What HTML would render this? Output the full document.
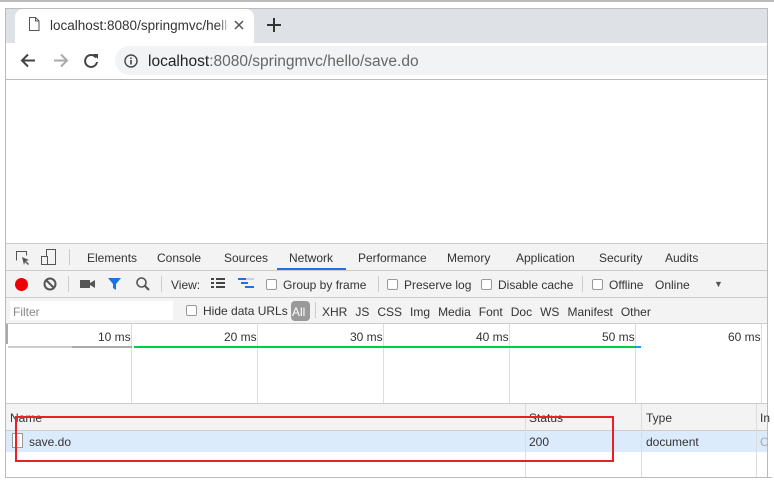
<!DOCTYPE html>
<html><head><meta charset="utf-8"><style>
*{box-sizing:border-box;margin:0;padding:0}
body{width:774px;height:483px;background:#fff;position:relative;overflow:hidden;font-family:"Liberation Sans",sans-serif;color:#333}
.a{position:absolute}
.t{font-size:12px;color:#333;white-space:nowrap;margin-top:1px}
.cb{display:inline-block;width:11px;height:11px;border:1px solid #999;border-radius:2px;background:#fff;vertical-align:-1px;margin-right:6px}
.sep{position:absolute;width:1px;background:#ccc}
.ft span{margin-right:8px}
</style></head><body>
<div class="a" style="left:0;top:0;width:774px;height:2px;background:#bbb"></div>
<div class="a" style="left:5px;top:8px;width:763px;height:470px;border:1px solid #bbb;border-bottom:none"></div>
<div class="a" style="left:6px;top:9px;width:761px;height:34px;background:#dee1e6"></div>
<div class="a" style="left:15px;top:9px;width:239px;height:34px;background:#fff;border-radius:8px 8px 0 0"></div>
<svg class="a" style="left:28px;top:17px" width="12" height="14"><path d="M1.5 .5h6l3.5 3.5v9.5h-9.5z M7.5 .5v3.5h3.5" fill="none" stroke="#555"/></svg>
<div class="a t" style="left:50px;top:17px;font-size:13.5px;color:#333;width:178px;overflow:hidden">localhost:8080/springmvc/hello</div>
<div class="a" style="left:218px;top:15px;width:12px;height:20px;background:linear-gradient(90deg,rgba(255,255,255,0),#fff)"></div>
<svg class="a" style="left:234px;top:20px" width="10" height="10"><path d="M1 1l8 8M9 1l-8 8" stroke="#555" stroke-width="1.5"/></svg>
<svg class="a" style="left:267px;top:18px" width="14" height="14"><path d="M7 0v14M0 7h14" stroke="#333" stroke-width="2"/></svg>
<svg class="a" style="left:20px;top:53px" width="16" height="15"><path d="M15 7.5H2M8 1.5l-6 6 6 6" fill="none" stroke="#444" stroke-width="2"/></svg>
<svg class="a" style="left:53px;top:53px" width="16" height="15"><path d="M1 7.5h13M8 1.5l6 6-6 6" fill="none" stroke="#aaa" stroke-width="2"/></svg>
<svg class="a" style="left:84px;top:53px" width="15" height="15"><path d="M12 4.5A6 6 0 1 0 13 9" fill="none" stroke="#444" stroke-width="2"/><path d="M9 1l5 0 0 5z" fill="#444"/></svg>
<div class="a" style="left:115px;top:46px;width:652px;height:29px;background:#f1f3f4;border-radius:15px 0 0 15px"></div>
<svg class="a" style="left:124px;top:54px" width="14" height="14"><circle cx="7" cy="7" r="6" fill="none" stroke="#444" stroke-width="1.4"/><path d="M7 6v4.5M7 3.5v1.5" stroke="#444" stroke-width="1.6"/></svg>
<div class="a t" style="left:148px;top:52px;font-size:15.5px;color:#222">localhost<span style="color:#666">:8080/springmvc/hello/save.do</span></div>
<div class="a" style="left:6px;top:79px;width:761px;height:1px;background:#bbb"></div>
<div class="a" style="left:6px;top:243px;width:761px;height:1px;background:#ccc"></div>
<div class="a" style="left:6px;top:244px;width:761px;height:233px;background:#f3f3f3"></div>
<svg class="a" style="left:15px;top:250px" width="16" height="16"><path d="M1.5 10.5v-9h10v4" fill="none" stroke="#555"/><path d="M7 7l7 3-3 1 3 3-1 1-3-3-1 3z" fill="#555"/></svg>
<svg class="a" style="left:41px;top:249px" width="16" height="17"><rect x="5.5" y=".5" width="9" height="15" fill="none" stroke="#555"/><rect x=".5" y="7.5" width="6" height="8" fill="#f3f3f3" stroke="#555"/></svg>
<div class="sep" style="left:69px;top:249px;height:16px"></div>
<div class="a t" style="left:87px;top:250px">Elements</div>
<div class="a t" style="left:157px;top:250px">Console</div>
<div class="a t" style="left:224px;top:250px">Sources</div>
<div class="a t" style="left:289px;top:250px">Network</div>
<div class="a" style="left:277px;top:268px;width:69px;height:2px;background:#1a73e8"></div>
<div class="a t" style="left:358px;top:250px">Performance</div>
<div class="a t" style="left:447px;top:250px">Memory</div>
<div class="a t" style="left:516px;top:250px">Application</div>
<div class="a t" style="left:599px;top:250px">Security</div>
<div class="a t" style="left:665px;top:250px">Audits</div>
<div class="a" style="left:6px;top:270px;width:761px;height:1px;background:#ccc"></div>
<div class="a" style="left:15px;top:278px;width:13px;height:13px;border-radius:50%;background:#e00"></div>
<svg class="a" style="left:43px;top:277px" width="14" height="14"><circle cx="7" cy="7" r="5.5" fill="none" stroke="#555" stroke-width="2"/><path d="M3 3l8 8" stroke="#555" stroke-width="2"/></svg>
<div class="sep" style="left:68px;top:276px;height:16px"></div>
<svg class="a" style="left:80px;top:279px" width="15" height="10"><rect x="0" y="1" width="10" height="8" fill="#555"/><path d="M10 4l5-3v8l-5-3z" fill="#555"/></svg>
<svg class="a" style="left:107px;top:277px" width="15" height="14"><path d="M1 1h13l-5 6v6l-3-2v-4z" fill="#1a73e8"/></svg>
<svg class="a" style="left:136px;top:277px" width="14" height="14"><circle cx="5.5" cy="5.5" r="4.5" fill="none" stroke="#555" stroke-width="1.6"/><path d="M9 9l4 4" stroke="#555" stroke-width="2"/></svg>
<div class="sep" style="left:161px;top:276px;height:16px"></div>
<div class="a t" style="left:171px;top:277px">View:</div>
<svg class="a" style="left:211px;top:278px" width="14" height="12"><path d="M0 1h3M5 1h9M0 5h3M5 5h9M0 9h3M5 9h9" stroke="#444" stroke-width="2"/></svg>
<svg class="a" style="left:238px;top:278px" width="16" height="12"><path d="M0 1h8M3 5h7M7 9h9" stroke="#1a73e8" stroke-width="2"/><path d="M8 1h8" stroke="#aac" stroke-width="1"/></svg>
<div class="a t" style="left:266px;top:277px"><span class="cb"></span>Group by frame</div>
<div class="sep" style="left:378px;top:276px;height:16px"></div>
<div class="a t" style="left:387px;top:277px"><span class="cb"></span>Preserve log</div>
<div class="a t" style="left:481px;top:277px"><span class="cb"></span>Disable cache</div>
<div class="sep" style="left:582px;top:276px;height:16px"></div>
<div class="a t" style="left:592px;top:277px"><span class="cb"></span>Offline</div>
<div class="a t" style="left:655px;top:277px">Online</div>
<div class="a t" style="left:714px;top:278px;font-size:9px;color:#555">▼</div>
<div class="a" style="left:6px;top:297px;width:761px;height:1px;background:#ccc"></div>
<div class="a" style="left:10px;top:301px;width:163px;height:19px;background:#fff"></div>
<div class="a t" style="left:13px;top:304px;color:#888">Filter</div>
<div class="a t" style="left:186px;top:303px"><span class="cb"></span>Hide data URLs</div>
<div class="a" style="left:291px;top:301px;width:19px;height:20px;border-radius:4px;background:#999"></div>
<div class="a t" style="left:292px;top:304px;color:#fff">All</div>
<div class="sep" style="left:315px;top:302px;height:16px"></div>
<div class="a t ft" style="left:322px;top:304px"><span>XHR</span><span>JS</span><span>CSS</span><span>Img</span><span>Media</span><span>Font</span><span>Doc</span><span>WS</span><span>Manifest</span><span>Other</span></div>
<div class="a" style="left:6px;top:323px;width:761px;height:1px;background:#ccc"></div>
<div class="a" style="left:6px;top:324px;width:761px;height:79px;background:#fff"></div>
<div class="a" style="left:6px;top:324px;width:2px;height:20px;background:#aaa"></div>
<div class="sep" style="left:131px;top:324px;height:79px;background:#ddd"></div>
<div class="sep" style="left:257px;top:324px;height:79px;background:#ddd"></div>
<div class="sep" style="left:383px;top:324px;height:79px;background:#ddd"></div>
<div class="sep" style="left:509px;top:324px;height:79px;background:#ddd"></div>
<div class="sep" style="left:635px;top:324px;height:79px;background:#ddd"></div>
<div class="sep" style="left:761px;top:324px;height:79px;background:#ddd"></div>
<div class="a t" style="left:98px;top:329px">10 ms</div>
<div class="a t" style="left:224px;top:329px">20 ms</div>
<div class="a t" style="left:350px;top:329px">30 ms</div>
<div class="a t" style="left:476px;top:329px">40 ms</div>
<div class="a t" style="left:602px;top:329px">50 ms</div>
<div class="a t" style="left:728px;top:329px">60 ms</div>
<div class="a" style="left:8px;top:346px;width:64px;height:2px;background:#ccc"></div>
<div class="a" style="left:72px;top:346px;width:60px;height:2px;background:#aaa"></div>
<div class="a" style="left:134px;top:346px;width:507px;height:2px;background:#0c4"></div>
<div class="a" style="left:636px;top:346px;width:5px;height:2px;background:#29f"></div>
<div class="a" style="left:6px;top:403px;width:761px;height:1px;background:#ccc"></div>
<div class="a" style="left:6px;top:404px;width:761px;height:26px;background:#f3f3f3"></div>
<div class="a" style="left:6px;top:430px;width:761px;height:1px;background:#ccc"></div>
<div class="a" style="left:6px;top:431px;width:761px;height:21px;background:#dcebfc"></div>
<div class="a" style="left:6px;top:452px;width:761px;height:25px;background:#fff"></div>
<div class="a" style="left:6px;top:477px;width:769px;height:1px;background:#bbb"></div>
<div class="sep" style="left:525px;top:404px;height:73px;background:#ddd"></div>
<div class="sep" style="left:641px;top:404px;height:73px;background:#ddd"></div>
<div class="sep" style="left:756px;top:404px;height:73px;background:#ddd"></div>
<div class="a t" style="left:10px;top:410px">Name</div>
<div class="a t" style="left:529px;top:410px">Status</div>
<div class="a t" style="left:646px;top:410px">Type</div>
<div class="a t" style="left:760px;top:410px">In</div>
<svg class="a" style="left:12px;top:433px" width="11" height="15"><rect x=".5" y=".5" width="10" height="14" fill="#fff" stroke="#999"/><path d="M3 4h5M3 6h5M3 8h5M3 10h5M3 12h5" stroke="#ddd"/></svg>
<div class="a t" style="left:29px;top:434px">save.do</div>
<div class="a t" style="left:529px;top:434px">200</div>
<div class="a t" style="left:646px;top:434px">document</div>
<div class="a t" style="left:760px;top:434px;color:#aaa">C</div>
<div class="a" style="left:15px;top:416px;width:599px;height:46px;border:2px solid #e8202a"></div>
<div class="a" style="left:772px;top:8px;width:2px;height:470px;background:#fff"></div>
</body></html>
